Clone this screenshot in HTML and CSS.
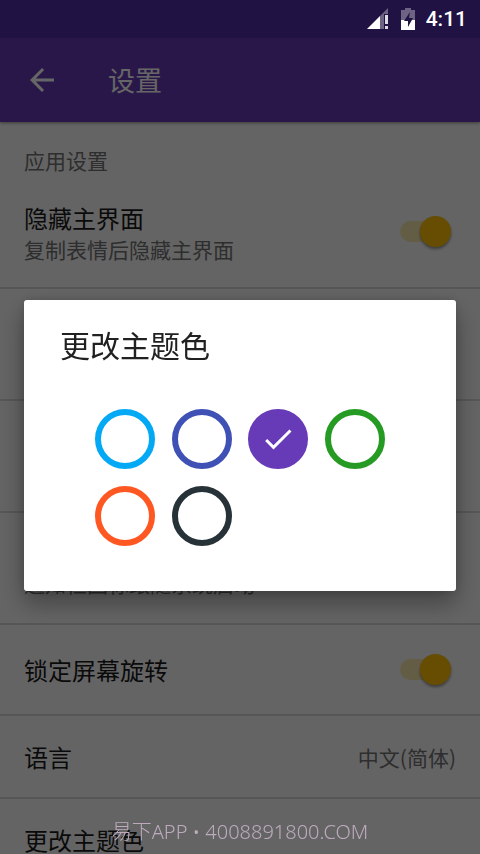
FILE: index.html
```html
<!DOCTYPE html>
<html lang="zh-CN">
<head>
  <meta charset="utf-8">
  <meta name="viewport" content="width=device-width, initial-scale=1">
  <title>设置</title>
  <link rel="stylesheet" href="styles.css">
</head>
<body>
  <div class="screen">
    <div class="status-bar">
      <svg class="status-icon signal" viewBox="0 0 22 22" aria-hidden="true">
        <path d="M21 0V6H17V21H13V8z" fill="#fff" fill-opacity=".35"/>
        <path d="M0 21L13 8V21z" fill="#fff"/>
        <path d="M18 7h3v9h-3zM18 18h3v3h-3z" fill="#fff" fill-opacity=".85"/>
      </svg>
      <svg class="status-icon battery" viewBox="0 0 14 22" aria-hidden="true">
        <path d="M4 0h6v2h4v10H0V2h4z" fill="#fff" fill-opacity=".35"/>
        <path d="M0 12h14v10H0z" fill="#fff"/>
        <path d="M9 4L3 13h4v6l5-9H8z" fill="#201243"/>
      </svg>
      <time class="clock">4:11</time>
    </div>

    <header class="app-bar">
      <button class="back" type="button" aria-label="返回">
        <svg viewBox="0 0 24 24" aria-hidden="true"><path d="M20 11H7.83l5.59-5.59L12 4l-8 8 8 8 1.41-1.41L7.83 13H20z"/></svg>
      </button>
      <h1 class="app-title">设置</h1>
    </header>

    <main class="settings">
      <h2 class="category">应用设置</h2>
      <div class="row">
        <label class="row-text" for="hide-main">
          <span class="row-title">隐藏主界面</span>
          <span class="row-summary">复制表情后隐藏主界面</span>
        </label>
        <input class="switch" type="checkbox" id="hide-main" checked>
      </div>
      <div class="row row-tall"></div>
      <div class="row row-tall"></div>
      <div class="row row-tall row-end">
        <span class="row-summary">通知栏图标跟随系统启动</span>
      </div>
      <div class="row row-switch">
        <label class="row-title" for="lock-rotation">锁定屏幕旋转</label>
        <input class="switch" type="checkbox" id="lock-rotation" checked>
      </div>
      <div class="row row-plain">
        <span class="row-title">语言</span>
        <span class="row-value">中文(简体)</span>
      </div>
      <div class="row row-plain">
        <span class="row-title">更改主题色</span>
      </div>
    </main>
  </div>

  <div class="scrim">
    <section class="dialog" role="dialog" aria-labelledby="dialog-title">
      <h2 class="dialog-title" id="dialog-title">更改主题色</h2>
      <div class="swatches">
        <label class="swatch"><input class="blue" type="radio" name="theme" aria-label="蓝色"></label>
        <label class="swatch"><input class="indigo" type="radio" name="theme" aria-label="靛蓝"></label>
        <label class="swatch">
          <input class="purple" type="radio" name="theme" aria-label="紫色" checked>
          <svg viewBox="0 0 24 24" aria-hidden="true"><path d="M9 16.17L4.83 12l-1.42 1.41L9 19 21 7l-1.41-1.41z"/></svg>
        </label>
        <label class="swatch"><input class="green" type="radio" name="theme" aria-label="绿色"></label>
        <label class="swatch"><input class="orange" type="radio" name="theme" aria-label="橙色"></label>
        <label class="swatch"><input class="dark" type="radio" name="theme" aria-label="深色"></label>
      </div>
    </section>
  </div>

  <p class="watermark">易下APP • 4008891800.COM</p>
</body>
</html>
```

FILE: styles.css
```css
* {
  box-sizing: border-box;
}

body {
  margin: 0;
  font-family: "Noto Sans CJK SC", Roboto, sans-serif;
  color: #212121;
  background: #fafafa;
}

h1, h2, p {
  margin: 0;
  font-weight: 400;
}

.screen {
  display: flex;
  flex-direction: column;
  height: 100vh;
  overflow: hidden;
}

/* Status bar stays above the scrim */
.status-bar {
  position: relative;
  z-index: 3;
  flex: none;
  display: flex;
  align-items: center;
  justify-content: flex-end;
  height: 38px;
  padding-right: 13px;
  background: #201243;
  color: #fff;
}

.status-icon {
  height: 22px;
}

.signal {
  width: 22px;
  margin-right: 12px;
}

.battery {
  width: 14px;
  margin-right: 11px;
}

.clock {
  font-family: Roboto, sans-serif;
  font-size: 21px;
  font-weight: 500;
  line-height: 24px;
}

.app-bar {
  position: relative;
  z-index: 1;
  flex: none;
  display: flex;
  align-items: center;
  gap: 48px;
  height: 84px;
  padding: 0 24px;
  background: #673ab7;
  color: #fff;
  box-shadow: 0 1px 3px rgba(0, 0, 0, .4);
}

.back {
  width: 36px;
  height: 36px;
  padding: 0;
  border: 0;
  background: none;
}

.back svg {
  display: block;
  fill: #fff;
}

.app-title {
  font-size: 27px;
  line-height: 36px;
}

.settings {
  flex: 1;
  overflow: hidden;
}

.category {
  padding: 23px 24px 2px;
  font-size: 21px;
  line-height: 30px;
  color: #737373;
}

.row {
  display: flex;
  align-items: center;
  justify-content: space-between;
  min-height: 83px;
  padding: 0 24px;
  border-bottom: 2px solid #d8d8d8;
}

.row-tall,
.row:has(.row-text) {
  min-height: 112px;
}

.row-end {
  align-items: flex-end;
  padding-bottom: 26px;
}

.row-switch {
  min-height: 91px;
}

.row-text {
  display: flex;
  flex-direction: column;
}

.row-title {
  font-size: 24px;
  line-height: 34px;
  color: #1a1a1a;
}

.row-summary,
.row-value {
  font-size: 21px;
  line-height: 28px;
  color: #737373;
}

.switch {
  appearance: none;
  position: relative;
  width: 51px;
  height: 32px;
  margin: 0 5px 0 0;
}

.switch::before {
  content: "";
  position: absolute;
  inset: 5px 3px 6px 0;
  border-radius: 11px;
  background: rgba(255, 193, 7, .3);
}

.switch::after {
  content: "";
  position: absolute;
  top: 0;
  right: 0;
  width: 31px;
  height: 31px;
  border-radius: 50%;
  background: #ffc107;
  box-shadow: 0 2px 3px rgba(0, 0, 0, .4);
}

.scrim {
  position: fixed;
  inset: 0;
  z-index: 2;
  display: flex;
  align-items: center;
  padding: 37px 24px 0;
  background: rgba(0, 0, 0, .6);
}

.dialog {
  flex: 1;
  padding: 26px 36px 45px;
  border-radius: 3px;
  background: #fff;
  box-shadow: 0 12px 24px rgba(0, 0, 0, .35), 0 0 10px rgba(0, 0, 0, .15);
}

.dialog-title {
  margin-bottom: 47px;
  font-size: 30px;
  line-height: 36px;
}

.swatches {
  display: grid;
  grid-template-columns: repeat(4, 60px);
  justify-content: space-between;
  row-gap: 17px;
  max-width: 290px;
  margin: 0 auto;
}

.swatch {
  display: grid;
  place-items: center;
  height: 60px;
}

.swatch > * {
  grid-area: 1 / 1;
}

.swatch input {
  appearance: none;
  width: 60px;
  height: 60px;
  margin: 0;
  border: 6px solid currentColor;
  border-radius: 50%;
}

.swatch input:checked {
  background: currentColor;
}

.swatch svg {
  z-index: 1;
  width: 36px;
  height: 36px;
  fill: #fff;
}

.blue { color: #03a9f4; }
.indigo { color: #3f51b5; }
.purple { color: #673ab7; }
.green { color: #259b24; }
.orange { color: #ff5722; }
.dark { color: #263238; }

.watermark {
  position: fixed;
  right: 0;
  bottom: 8px;
  left: 0;
  z-index: 3;
  font-family: "Noto Sans", "Noto Sans CJK SC", sans-serif;
  font-size: 20px;
  font-weight: 300;
  line-height: 28px;
  text-align: center;
  color: #bdabbd;
}
```
